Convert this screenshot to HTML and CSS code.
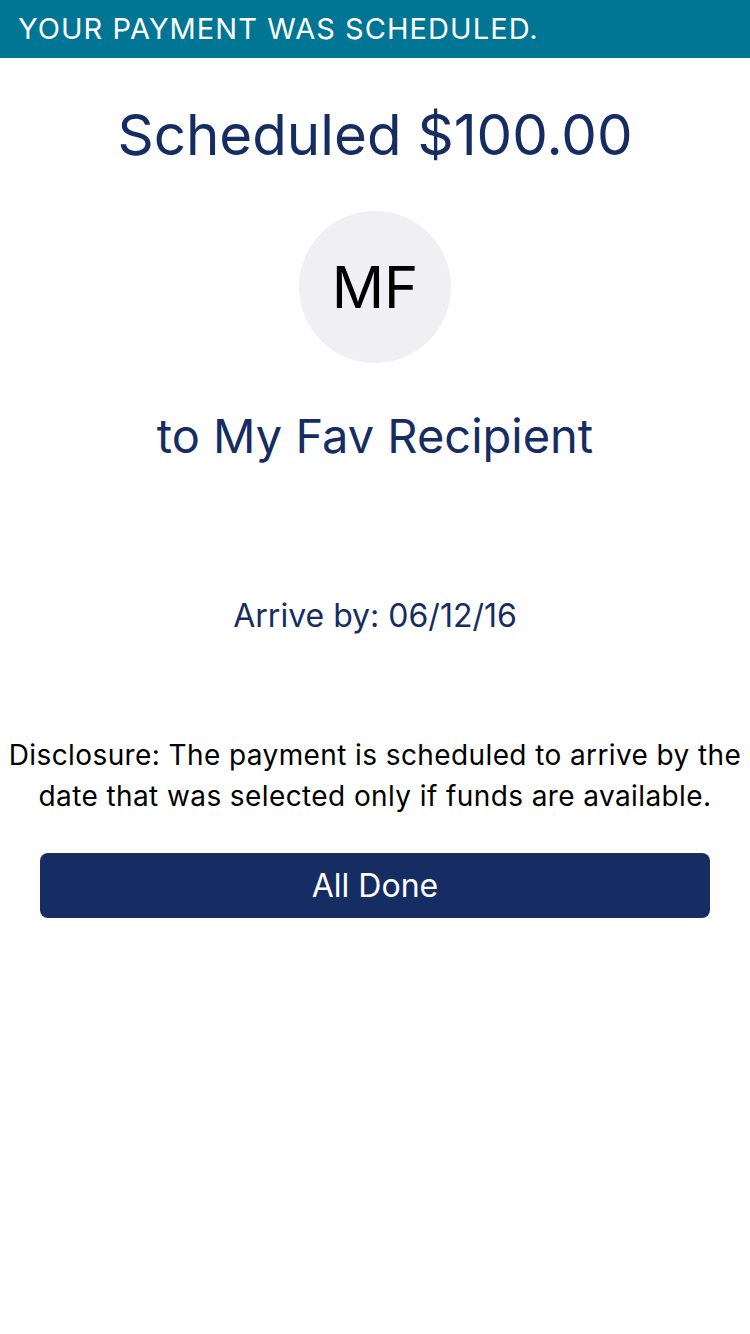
FILE: index.html
```html
<!DOCTYPE html>
<html>
<head>
<meta charset="utf-8">
<link rel="stylesheet" href="styles.css">
</head>
<body>
<div class="banner">YOUR PAYMENT WAS SCHEDULED.</div>
<main class="content">
  <h1 class="amount">Scheduled $100.00</h1>
  <div class="avatar">MF</div>
  <div class="recipient">to My Fav Recipient</div>
  <div class="arrive">Arrive by: 06/12/16</div>
  <p class="disclosure">Disclosure: The payment is scheduled to arrive by the date that was selected only if funds are available.</p>
  <button class="done">All Done</button>
</main>
</body>
</html>
```

FILE: styles.css
```css
* { box-sizing: border-box; }
html, body { margin: 0; padding: 0; background: #fff; }
body {
  width: 750px;
  height: 1334px;
  font-family: Inter, "Noto Sans", sans-serif;
  overflow: hidden;
}
.banner {
  height: 58px;
  background: #007694;
  color: #fff;
  font-size: 29px;
  line-height: 58px;
  padding-left: 18px;
  letter-spacing: 1.05px;
  white-space: nowrap;
}
.content {
  display: flex;
  flex-direction: column;
  align-items: center;
  text-align: center;
}
.amount {
  margin: 0;
  margin-top: 44px;
  height: 66px;
  line-height: 66px;
  font-size: 56.5px;
  font-weight: 400;
  color: #162d64;
}
.avatar {
  margin-top: 43px;
  width: 152px;
  height: 152px;
  border-radius: 50%;
  background: #efeff4;
  color: #000;
  font-size: 58px;
  line-height: 152px;
  text-align: center;
}
.recipient {
  margin-top: 45px;
  height: 56px;
  line-height: 56px;
  font-size: 47px;
  color: #162d64;
}
.arrive {
  margin-top: 132px;
  height: 40px;
  line-height: 40px;
  font-size: 32px;
  color: #162d64;
}
.disclosure {
  margin: 99px 0 0;
  padding: 0;
  font-size: 28px;
  letter-spacing: 0.4px;
  line-height: 41px;
  color: #000;
}
.done {
  margin-top: 36px;
  width: 670px;
  height: 65px;
  border: none;
  border-radius: 8px;
  background: #162d64;
  color: #fff;
  font-family: Inter, "Noto Sans", sans-serif;
  font-size: 32px;
  padding: 0;
}
```
